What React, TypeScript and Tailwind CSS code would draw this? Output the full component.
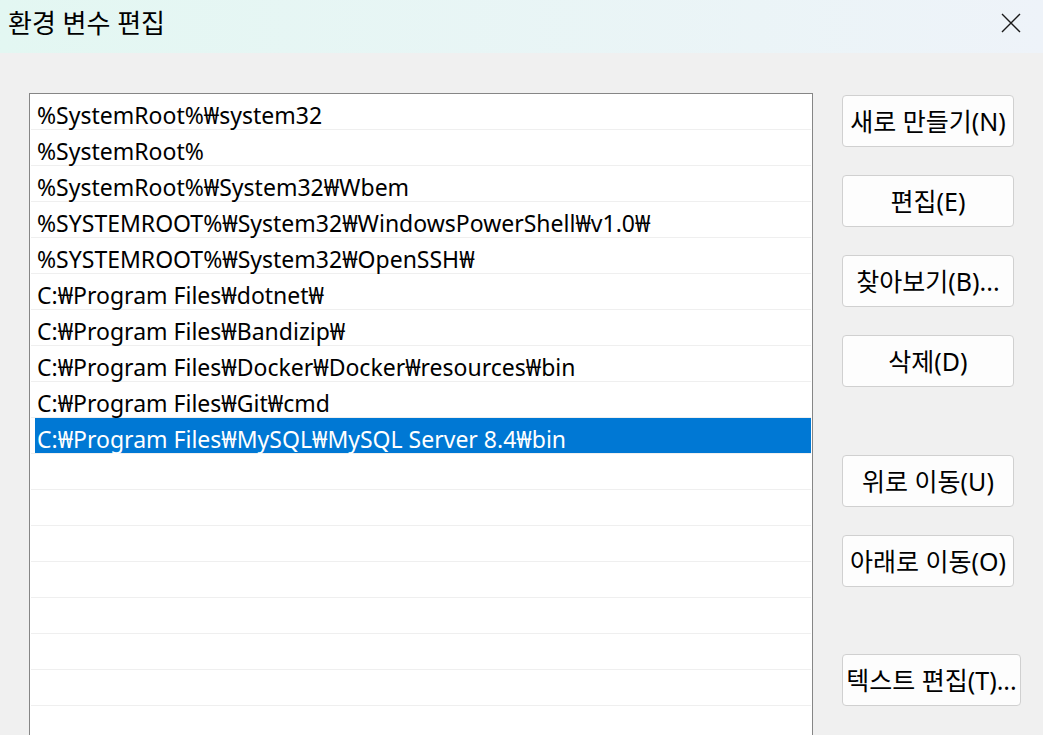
import React from 'react';

const paths = [
  '%SystemRoot%₩system32',
  '%SystemRoot%',
  '%SystemRoot%₩System32₩Wbem',
  '%SYSTEMROOT%₩System32₩WindowsPowerShell₩v1.0₩',
  '%SYSTEMROOT%₩System32₩OpenSSH₩',
  'C:₩Program Files₩dotnet₩',
  'C:₩Program Files₩Bandizip₩',
  'C:₩Program Files₩Docker₩Docker₩resources₩bin',
  'C:₩Program Files₩Git₩cmd',
  'C:₩Program Files₩MySQL₩MySQL Server 8.4₩bin',
];

const selected = 9;
const totalRows = 18;

function Btn({ label, className = '' }: { label: string; className?: string }) {
  return (
    <button
      className={`h-[52px] rounded-[4px] border border-[#d0d0d0] bg-[#fdfdfd] text-[25px] leading-none text-black flex items-center justify-center whitespace-nowrap ${className}`}
    >
      {label}
    </button>
  );
}

export default function App() {
  const rows = Array.from({ length: totalRows }, (_, i) => paths[i] ?? '');

  return (
    <div
      className="w-[1043px] h-[735px] overflow-hidden bg-[#f0f0f0] flex flex-col"
      style={{ fontFamily: '"Noto Sans", "Noto Sans CJK KR", sans-serif' }}
    >
      {/* Title bar */}
      <div className="h-[53px] shrink-0 flex items-center justify-between pl-[8px] pr-[22px] bg-gradient-to-r from-[#e3f7f2] to-[#eef3f9]">
        <span className="text-[26px] leading-none text-black -mt-[8px]">환경 변수 편집</span>
        <svg width="20" height="20" viewBox="0 0 20 20" className="-mt-[8px]">
          <path d="M1 1 L19 19 M19 1 L1 19" stroke="#1a1a1a" strokeWidth="1.4" fill="none" />
        </svg>
      </div>

      <div className="flex flex-1 pl-[29px] pt-[40px]">
        {/* List */}
        <div className="w-[784px] bg-white border-l border-t border-r border-[#868686] pl-[1px] pr-[1px]">
          {rows.map((p, i) => (
            <div key={i} className="h-[36px] border-b border-[#efefef] flex items-stretch">
              <div
                className={`flex-1 flex items-center pt-[7px] ${i === selected ? 'ml-[4px] bg-[#0078d4] text-white pl-[2px]' : 'pl-[6px] text-black'} text-[23px] leading-none whitespace-nowrap`}
              >
                {p}
              </div>
            </div>
          ))}
        </div>

        {/* Buttons */}
        <div className="flex flex-col pl-[29px] pt-[2px]">
          <Btn label="새로 만들기(N)" className="w-[172px]" />
          <Btn label="편집(E)" className="w-[172px] mt-[28px]" />
          <Btn label="찾아보기(B)..." className="w-[172px] mt-[28px]" />
          <Btn label="삭제(D)" className="w-[172px] mt-[28px]" />
          <Btn label="위로 이동(U)" className="w-[172px] mt-[68px]" />
          <Btn label="아래로 이동(O)" className="w-[172px] mt-[28px]" />
          <Btn label="텍스트 편집(T)..." className="w-[179px] mt-[67px]" />
        </div>
      </div>
    </div>
  );
}
